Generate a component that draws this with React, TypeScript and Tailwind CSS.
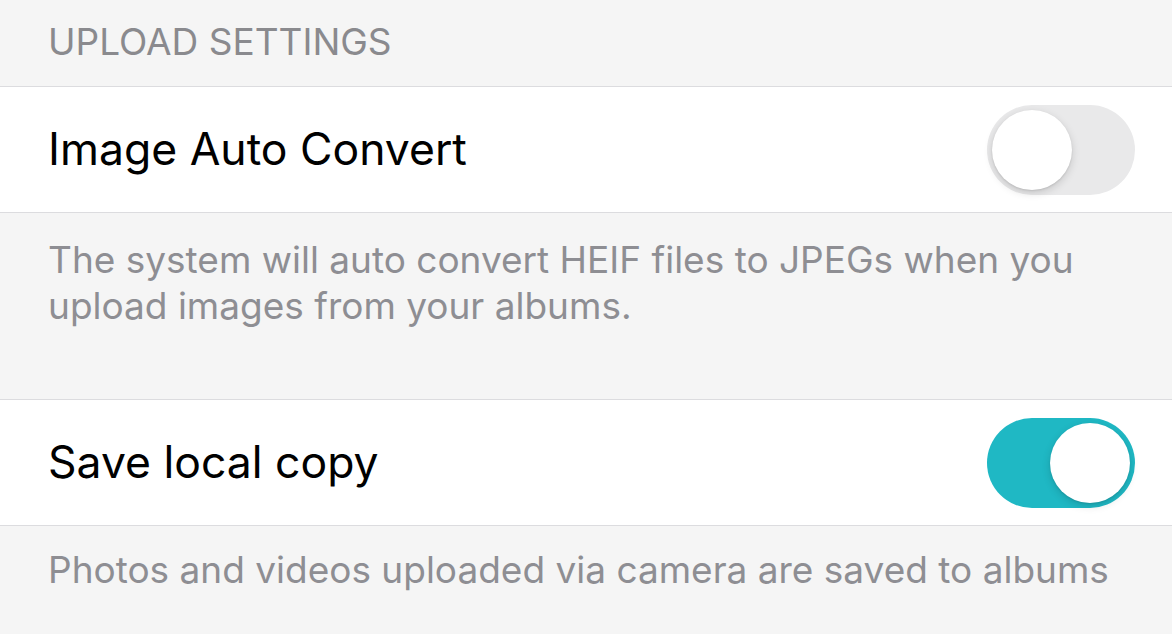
import React, { useState } from 'react';

const Toggle: React.FC<{ on: boolean; onChange: () => void }> = ({ on, onChange }) => {
  return (
    <button
      onClick={onChange}
      className={`relative w-[148px] h-[90px] rounded-full shrink-0 transition-colors ${
        on ? 'bg-[#1fb8c4]' : 'bg-[#e9e9ea]'
      }`}
    >
      <span
        className={`absolute top-[5px] w-[80px] h-[80px] rounded-full bg-white shadow-[0_3px_8px_rgba(0,0,0,0.15),0_1px_2px_rgba(0,0,0,0.1)] transition-all ${
          on ? 'left-[63px]' : 'left-[5px]'
        }`}
      />
    </button>
  );
};

const Row: React.FC<{ label: string; on: boolean; onChange: () => void }> = ({ label, on, onChange }) => (
  <div className="flex items-center justify-between bg-white border-y border-[#dcdcdf] h-[127px] pl-[48px] pr-[37px]">
    <span className="text-[44.5px] text-black">{label}</span>
    <Toggle on={on} onChange={onChange} />
  </div>
);

export default function App() {
  const [convert, setConvert] = useState(false);
  const [saveCopy, setSaveCopy] = useState(true);

  return (
    <div className="w-[1172px] h-[634px] overflow-hidden bg-[#f5f5f5] font-['Inter','Liberation_Sans',sans-serif]">
      <div className="h-[86px] flex items-center pl-[48px] pb-[2px]">
        <span className="text-[37px] text-[#8a8a8e] uppercase">Upload Settings</span>
      </div>
      <Row label="Image Auto Convert" on={convert} onChange={() => setConvert(!convert)} />
      <div className="h-[186px] pl-[48px] pr-[50px] pt-[24px]">
        <p className="text-[37px] leading-[46px] text-[#8e8e93]">
          The system will auto convert HEIF files to JPEGs when you upload images from your albums.
        </p>
      </div>
      <Row label="Save local copy" on={saveCopy} onChange={() => setSaveCopy(!saveCopy)} />
      <div className="pl-[48px] pr-[30px] pt-[21px]">
        <p className="text-[37px] leading-[46px] text-[#8e8e93] whitespace-nowrap">
          Photos and videos uploaded via camera are saved to albums
        </p>
      </div>
    </div>
  );
}
